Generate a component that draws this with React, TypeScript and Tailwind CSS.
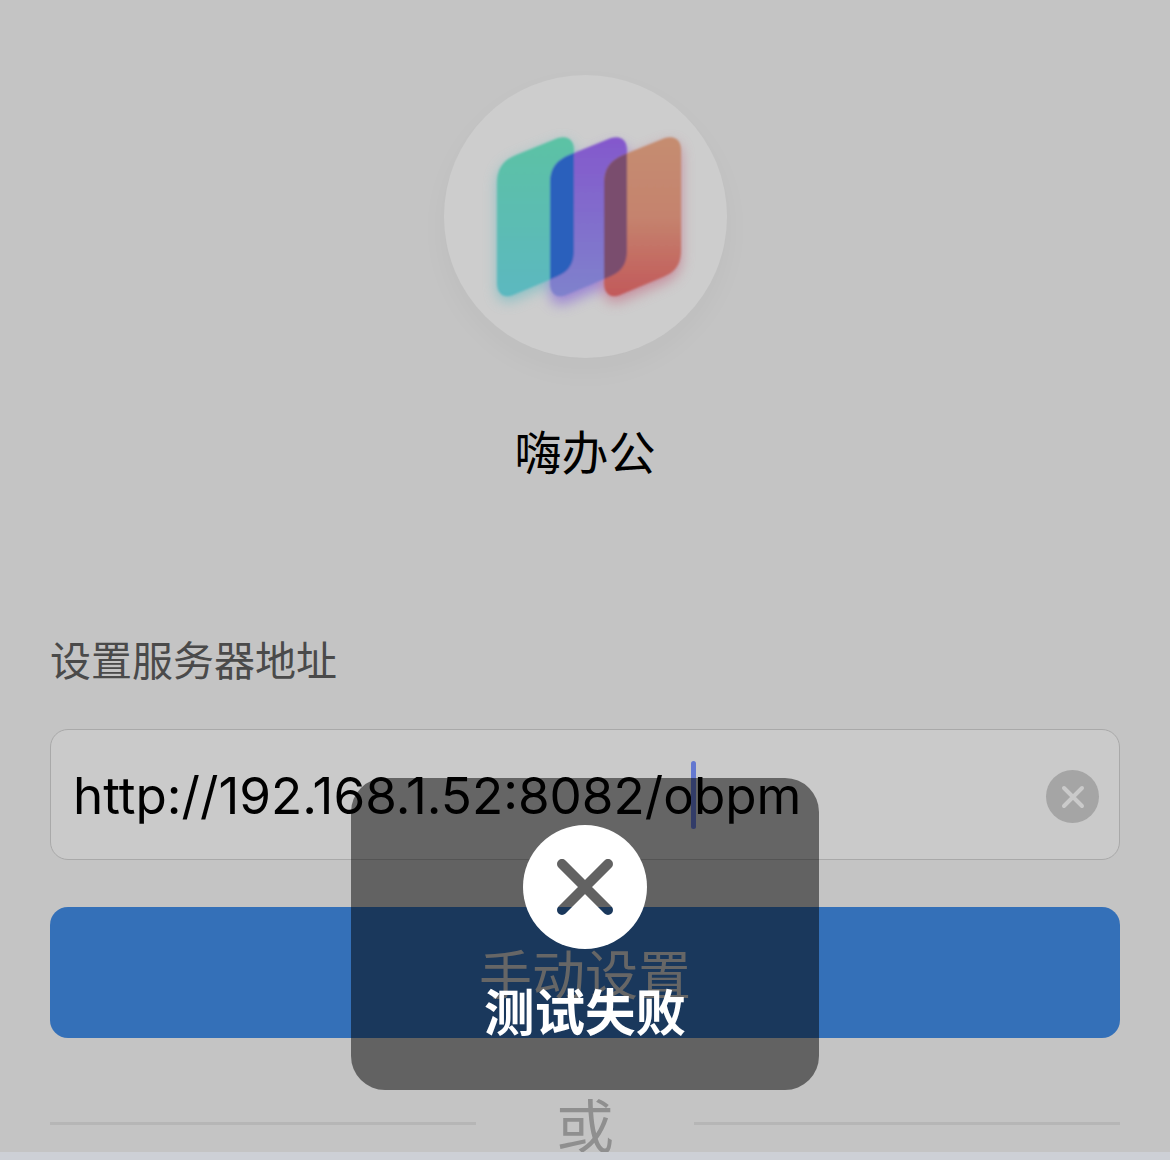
const cjk = "font-['Noto_Sans_CJK_SC','Liberation_Sans',sans-serif]";

const sheet = (x: number) =>
  `M${x} 183 C${x} 168 ${x + 7} 160 ${x + 19} 155 L${x + 61} 138 C${x + 71} 135 ${x + 77} 140 ${x + 77} 150 L${x + 77} 250 C${x + 77} 265 ${x + 71} 272 ${x + 59} 277 L${x + 16} 295 C${x + 6} 299 ${x} 293 ${x} 283 Z`;

const Logo = () => (
  <svg viewBox="444 75 283 283" className="size-full">
    <defs>
      <linearGradient id="teal" x1="0" y1="0" x2="0" y2="1">
        <stop offset="0" stopColor="#5cc2a4" />
        <stop offset="1" stopColor="#5cb8c0" />
      </linearGradient>
      <linearGradient id="purple" x1="0" y1="0" x2="0" y2="1">
        <stop offset="0" stopColor="#8458cc" />
        <stop offset="1" stopColor="#7f82cc" />
      </linearGradient>
      <linearGradient id="red" x1="0" y1="0" x2="0" y2="1">
        <stop offset="0" stopColor="#c58d70" />
        <stop offset="0.5" stopColor="#c5836e" />
        <stop offset="1" stopColor="#c2595a" />
      </linearGradient>
      <filter id="soft" x="-30%" y="-30%" width="160%" height="160%">
        <feGaussianBlur stdDeviation="7" />
      </filter>
      <filter id="edge" x="-5%" y="-5%" width="110%" height="110%">
        <feGaussianBlur stdDeviation="0.8" />
      </filter>
      <clipPath id="clipTeal">
        <path d={sheet(497)} />
      </clipPath>
      <clipPath id="clipPurple">
        <path d={sheet(550)} />
      </clipPath>
    </defs>
    <g filter="url(#soft)" opacity="0.6">
      <path d={sheet(497)} fill="#5cb8c0" transform="translate(0 5)" />
      <path d={sheet(550)} fill="#7a55d8" transform="translate(0 8)" />
      <path d={sheet(604)} fill="#c2607a" transform="translate(0 6)" />
    </g>
    <g filter="url(#edge)">
      <path d={sheet(497)} fill="url(#teal)" />
      <path d={sheet(550)} fill="url(#purple)" />
      <path d={sheet(604)} fill="url(#red)" />
      <path d={sheet(550)} fill="#2c60bc" clipPath="url(#clipTeal)" />
      <path d={sheet(604)} fill="#7a4d6e" clipPath="url(#clipPurple)" />
    </g>
  </svg>
);

const ErrorBadge = () => (
  <svg viewBox="0 0 124 124" className="size-[124px]">
    <defs>
      <mask id="cut">
        <rect width="124" height="124" fill="white" />
        <path d="M39 39 L85 85 M85 39 L39 85" stroke="black" strokeWidth="10" strokeLinecap="round" />
      </mask>
    </defs>
    <circle cx="62" cy="62" r="62" fill="white" mask="url(#cut)" />
  </svg>
);

export default function App() {
  return (
    <div className="relative flex h-[1160px] w-[1170px] flex-col overflow-hidden bg-[#cdd0d6]">
      <div className="flex h-[1152px] flex-col overflow-hidden bg-[#c4c4c4] px-[50px]">
        <div className="mx-auto mt-[75px] size-[283px] shrink-0 rounded-full bg-[#cdcdcd] shadow-[0_12px_30px_rgba(0,0,0,0.03)]">
          <Logo />
        </div>
        <h1 className={`mt-[60px] text-center text-[47px] leading-[64px] font-normal text-black ${cjk}`}>嗨办公</h1>
        <label className={`mt-[146px] text-[41px] leading-[60px] text-[#4a4a4a] ${cjk}`}>设置服务器地址</label>
        <div className="mt-[41px] flex h-[131px] shrink-0 items-center justify-between rounded-[18px] border border-[#a9a9a9] bg-[#cacaca] pr-[20px] pl-[22px]">
          <div className="font-['Inter',sans-serif] text-[51.2px] leading-[68px] whitespace-nowrap text-black">
            http://192.168.1.52:8082/o
            <span className="relative -mx-[2.5px] inline-block h-[68px] w-[5px] rounded-full bg-[#6478d0] align-top" />
            bpm
          </div>
          <button className="mt-[4px] flex size-[53px] items-center justify-center rounded-full bg-[#a5a5a5]">
            <svg viewBox="0 0 24 24" className="size-[24px]" fill="none" stroke="#cacaca" strokeWidth="4" strokeLinecap="round">
              <path d="M3 3 L21 21 M21 3 L3 21" />
            </svg>
          </button>
        </div>
        <button className={`mt-[47px] flex h-[131px] shrink-0 items-center justify-center rounded-[18px] bg-[#3470b8] text-[53px] text-[#cccccc] ${cjk}`}>
          手动设置
        </button>
        <div className="mt-[50px] flex h-[70px] shrink-0 items-center gap-[80px]">
          <div className="h-[3px] flex-1 bg-[#b6b6b6]" />
          <span className={`text-[58px] leading-[70px] text-[#8f8f8f] ${cjk}`}>或</span>
          <div className="h-[3px] flex-1 bg-[#b6b6b6]" />
        </div>
      </div>
      <div className="absolute top-[778px] left-[351px] flex h-[312px] w-[468px] flex-col items-center rounded-[34px] bg-black/50 pt-[47px]">
        <ErrorBadge />
        <p className={`mt-[24px] text-[50.5px] leading-[72px] font-bold text-white ${cjk}`}>测试失败</p>
      </div>
    </div>
  );
}
